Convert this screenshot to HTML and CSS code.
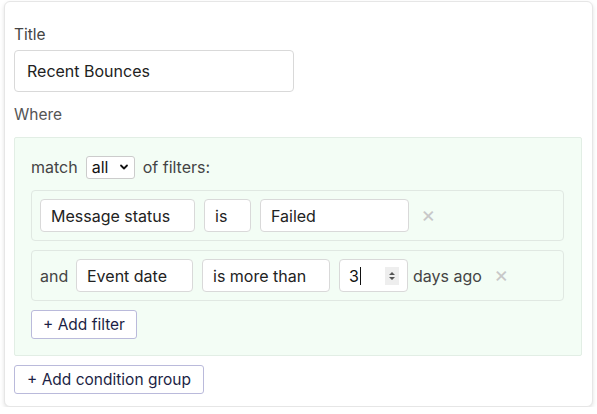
FILE: index.html
```html
<!DOCTYPE html>
<html>
<head>
<meta charset="utf-8">
<link rel="stylesheet" href="styles.css">
</head>
<body>
<div class="card">
  <div class="label">Title</div>
  <div class="input title-input">Recent Bounces</div>
  <div class="label where">Where</div>
  <div class="group">
    <div class="match-row">
      <span>match</span>
      <span class="select">all
        <svg width="10" height="8" viewBox="0 0 10 8"><path d="M2 2.5 L5 5.5 L8 2.5" fill="none" stroke="#111" stroke-width="1.8" stroke-linecap="round" stroke-linejoin="round"/></svg>
      </span>
      <span>of filters:</span>
    </div>
    <div class="filter">
      <div class="input f-field1">Message status</div>
      <div class="input f-op1">is</div>
      <div class="input f-val1">Failed</div>
      <span class="remove">×</span>
    </div>
    <div class="filter">
      <span class="conj">and</span>
      <div class="input f-field2">Event date</div>
      <div class="input f-op2">is more than</div>
      <div class="input number">3<span class="caret"></span>
        <span class="spin"><svg width="8" height="12" viewBox="0 0 8 12"><path d="M1 5 L4 2 L7 5 Z M1 7 L4 10 L7 7 Z" fill="#555"/></svg></span>
      </div>
      <span class="suffix">days ago</span>
      <span class="remove">×</span>
    </div>
    <button class="btn add-filter">+ Add filter</button>
  </div>
  <button class="btn add-group">+ Add condition group</button>
</div>
</body>
</html>
```
FILE: styles.css
```css
* { box-sizing: border-box; }
html, body { margin: 0; padding: 0; background: #fff; }
body {
  padding: 1px 4px 0 4px;
  font-family: Inter, "Noto Sans", sans-serif;
  font-size: 16px;
  color: #222;
}
.card {
  width: 589px;
  height: 406px;
  border: 1px solid #e6e6e6;
  border-radius: 6px;
  box-shadow: 0 2px 4px rgba(0,0,0,0.12);
  padding: 23px 9px 12px 9px;
  background: #fff;
}
.label {
  font-size: 15.5px;
  line-height: 20px;
  color: #444;
  margin-bottom: 5px;
}
.where { margin-top: 13px; margin-bottom: 12px; color: #555; }
.input {
  display: flex;
  align-items: center;
  border: 1px solid #d9d9d9;
  border-radius: 4px;
  background: #fff;
  height: 33px;
  padding-left: 10px;
  font-size: 16px;
  color: #222;
  white-space: nowrap;
}
.title-input {
  width: 280px;
  height: 42px;
  padding-left: 12px;
}
.group {
  width: 568px;
  background: #f3fdf5;
  border: 1px solid #e2eee5;
  border-radius: 2px;
  padding: 17px 16px 16px 16px;
}
.match-row {
  display: flex;
  align-items: center;
  gap: 8px;
  height: 24px;
  color: #444;
  font-size: 16px;
  margin-bottom: 11px;
}
.select {
  display: inline-flex;
  align-items: center;
  justify-content: space-between;
  width: 49px;
  height: 23px;
  border: 1px solid #ccc;
  border-radius: 3px;
  background: #fff;
  padding: 0 5px 0 5px;
  color: #111;
  font-size: 16px;
}
.filter {
  display: flex;
  align-items: center;
  gap: 9px;
  width: 533px;
  height: 51px;
  border: 1px solid #e0e8e2;
  border-radius: 4px;
  padding: 0 8px;
  margin-bottom: 9px;
  background: #f3fdf5;
}
.f-field1 { width: 155px; }
.f-op1 { width: 47px; }
.f-val1 { width: 149px; }
.conj { color: #444; width: 27px; }
.f-field2 { width: 117px; }
.f-op2 { width: 128px; }
.number { width: 69px; position: relative; padding-left: 9px; color: #111; }
.caret { display: inline-block; width: 1px; height: 18px; background: #111; margin-left: 1px; }
.spin {
  position: absolute;
  right: 8px;
  top: 7px;
  width: 14px;
  height: 18px;
  background: #eee;
  display: flex;
  align-items: center;
  justify-content: center;
}
.suffix { color: #444; margin-left: -4px; }
.remove {
  color: #c8c8c8;
  font-size: 22px;
  line-height: 20px;
  margin-left: 3px;
  margin-top: -4px;
}
.btn {
  display: block;
  font-family: Inter, "Noto Sans", sans-serif;
  font-size: 15.5px;
  color: #1c1f45;
  background: #fff;
  border: 1px solid #babadb;
  border-radius: 3px;
  height: 29px;
  padding: 0;
  text-align: center;
  white-space: nowrap;
}
.add-filter { width: 106px; }
.add-group { margin-top: 9px; width: 190px; }
```
